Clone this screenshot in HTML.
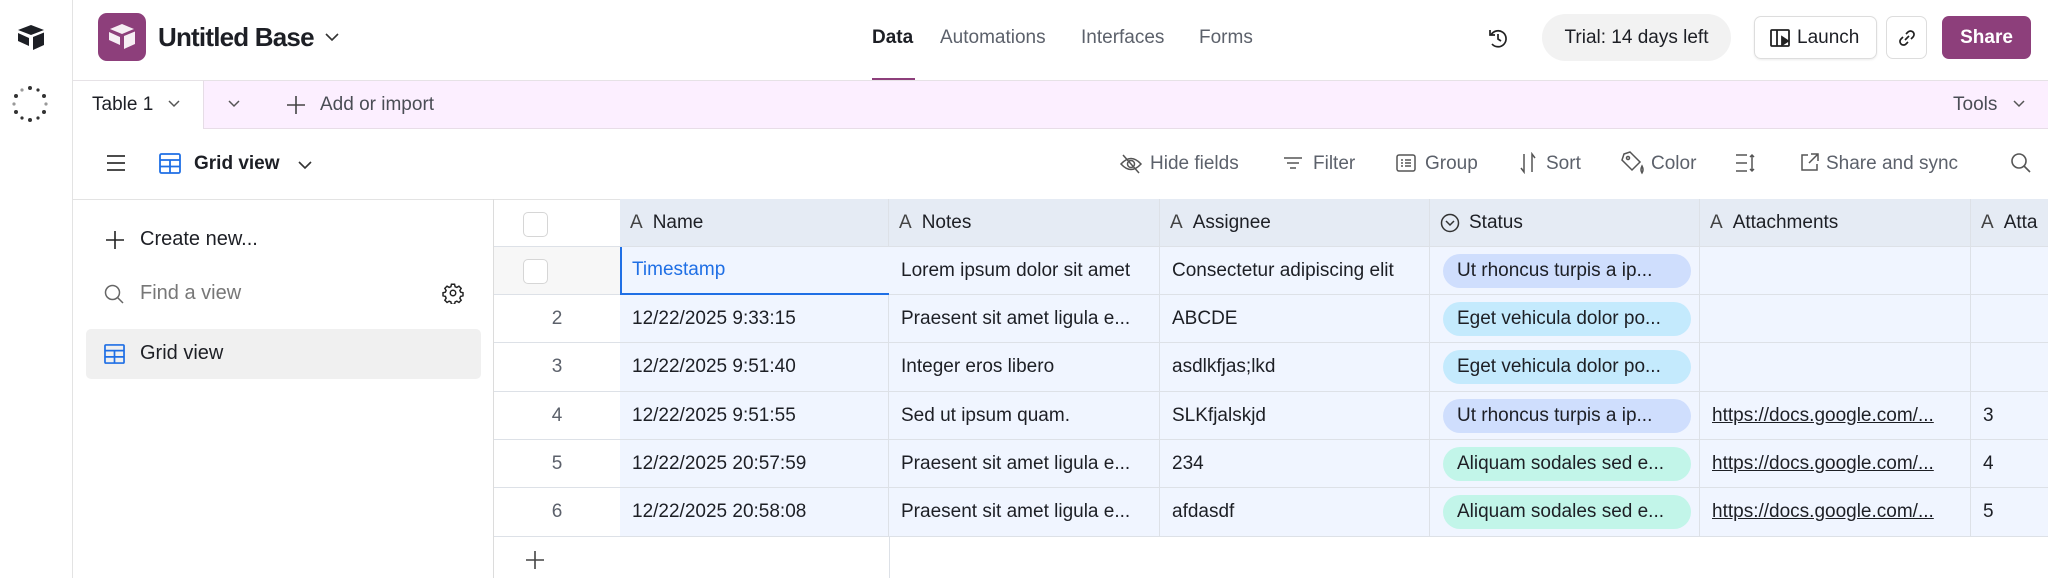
<!DOCTYPE html>
<html><head><meta charset="utf-8"><style>
*{box-sizing:border-box;margin:0;padding:0}
body{width:2048px;height:578px;overflow:hidden;background:#fff;font-family:"Liberation Sans",sans-serif;color:#1d1f25;position:relative;font-size:19px}
.a{position:absolute;white-space:nowrap}
.c{position:absolute;white-space:nowrap;overflow:hidden;display:flex;align-items:center;padding-left:12px;border-right:1px solid #dde1e7;border-bottom:1px solid #dde1e7;background:#f0f5ff}
.h{background:#e5ebf4;font-weight:normal}
.pill{border-radius:17px;height:34px;padding:0 14px;display:flex;align-items:center;width:248px;margin-left:4px}
.g{color:#5c616b}
</style></head><body>
<div class="a" style="left:72px;top:0;width:1px;height:578px;background:#e3e3e3"></div>
<svg class="a" style="left:16px;top:24px" width="30" height="28" viewBox="0 0 30 28"><path d="M15 1 L28 6 L15 11 L2 6Z" fill="#1d1f25"/><path d="M17 13 L28 8.5 V21 L17 26Z" fill="#1d1f25"/><path d="M2 9 L13 14 V22 L2 17Z" fill="#1d1f25"/></svg>
<svg class="a" style="left:10px;top:84px" width="40" height="40" viewBox="0 0 40 40"><g fill="#333"><circle cx="20" cy="4" r="2"/><circle cx="28" cy="6" r="1.6"/><circle cx="34" cy="12" r="2"/><circle cx="36" cy="20" r="1.6" fill="#999"/><circle cx="34" cy="28" r="2"/><circle cx="28" cy="34" r="1.6"/><circle cx="20" cy="36" r="2"/><circle cx="12" cy="34" r="1.6"/><circle cx="6" cy="28" r="2"/><circle cx="4" cy="20" r="1.6" fill="#999"/><circle cx="6" cy="12" r="2"/><circle cx="12" cy="6" r="1.6" fill="#999"/></g></svg>
<div class="a" style="left:98px;top:13px;width:48px;height:48px;border-radius:9px;background:#8d3f7b"></div>
<svg class="a" style="left:104px;top:19px" width="36" height="36" viewBox="0 0 36 36"><path d="M18 5 L30 10 L18 15 L6 10Z" fill="#f6eef4"/><path d="M20 17 L31 12.5 V25 L20 30Z" fill="#f6eef4"/><path d="M5 13 L16 18 V26 L5 21Z" fill="#f6eef4"/></svg>
<div class="a" style="left:158px;top:22px;font-size:26px;font-weight:bold;letter-spacing:-0.8px">Untitled Base</div>
<svg class="a" style="left:324px;top:31px" width="16" height="12"><path d="M2 3 L8 9 L14 3" stroke="#333" stroke-width="1.6" fill="none"/></svg>
<div class="a" style="left:872px;top:27px;font-size:19px;font-weight:bold">Data</div>
<div class="a" style="left:872px;top:78px;width:43px;height:3px;background:#8d3f7b"></div>
<div class="a g" style="left:940px;top:27px;font-size:19px">Automations</div>
<div class="a g" style="left:1081px;top:27px;font-size:19px">Interfaces</div>
<div class="a g" style="left:1199px;top:27px;font-size:19px">Forms</div>
<svg class="a" style="left:1486px;top:27px" width="24" height="24" viewBox="0 0 24 24" fill="none" stroke="#222" stroke-width="1.7"><path d="M5 8 A8 8 0 1 1 6 17"/><path d="M4 3 V8 H9"/><path d="M12 7 V12 L15 14"/></svg>
<div class="a" style="left:1542px;top:14px;width:189px;height:47px;border-radius:24px;background:#f2f2f2;display:flex;align-items:center;justify-content:center;font-size:19px">Trial: 14 days left</div>
<div class="a" style="left:1754px;top:16px;width:123px;height:43px;border-radius:7px;border:1px solid #ddd;box-shadow:0 1px 2px rgba(0,0,0,.08);display:flex;align-items:center;padding-left:14px;font-size:19px"><svg width="24" height="22" viewBox="0 0 24 22" fill="none" stroke="#222" stroke-width="1.8"><rect x="2" y="3" width="18" height="16" rx="1"/><path d="M8 3 V19"/><path d="M13 10 L19 14 L13 18Z" fill="#222"/></svg><span style="margin-left:4px">Launch</span></div>
<div class="a" style="left:1886px;top:16px;width:41px;height:43px;border-radius:7px;border:1px solid #ddd;display:flex;align-items:center;justify-content:center"><svg width="20" height="20" viewBox="0 0 20 20" fill="none" stroke="#222" stroke-width="1.7"><path d="M8 12 L12 8"/><path d="M9 6 L11 4 A3 3 0 0 1 16 9 L14 11"/><path d="M11 14 L9 16 A3 3 0 0 1 4 11 L6 9"/></svg></div>
<div class="a" style="left:1942px;top:16px;width:89px;height:43px;border-radius:7px;background:#8d3f7b;color:#fff;font-weight:bold;display:flex;align-items:center;justify-content:center;font-size:19px">Share</div>
<div class="a" style="left:73px;top:80px;width:1975px;height:49px;background:#fcefff;border-top:1px solid #e6e2e6;border-bottom:1px solid #e8dde8"></div>
<div class="a" style="left:73px;top:80px;width:131px;height:49px;background:#fff;border-right:1px solid #e6dde6;border-top:1px solid #e6e2e6"></div>
<div class="a" style="left:92px;top:94px;font-size:19px">Table 1</div>
<svg class="a" style="left:167px;top:98px" width="14" height="12"><path d="M2 3 L7 8 L12 3" stroke="#555" stroke-width="1.5" fill="none"/></svg>
<svg class="a" style="left:227px;top:98px" width="14" height="12"><path d="M2 3 L7 8 L12 3" stroke="#555" stroke-width="1.5" fill="none"/></svg>
<svg class="a" style="left:286px;top:95px" width="20" height="20"><path d="M10 1 V19 M1 10 H19" stroke="#444" stroke-width="1.6"/></svg>
<div class="a" style="left:320px;top:94px;font-size:19px;color:#4a4d55">Add or import</div>
<div class="a" style="left:1953px;top:94px;font-size:19px;color:#4a4d55">Tools</div>
<svg class="a" style="left:2012px;top:98px" width="14" height="12"><path d="M2 3 L7 8 L12 3" stroke="#555" stroke-width="1.5" fill="none"/></svg>
<svg class="a" style="left:106px;top:154px" width="20" height="18"><path d="M1 2 H19 M1 9 H19 M1 16 H19" stroke="#333" stroke-width="1.8"/></svg>
<svg class="a" style="left:159px;top:153px" width="22" height="21" viewBox="0 0 22 21" fill="none" stroke="#1f6fe5" stroke-width="1.8"><rect x="1" y="1" width="20" height="19" rx="1.5"/><path d="M1 7 H21 M1 13.5 H21 M11 7 V20"/></svg>
<div class="a" style="left:194px;top:153px;font-size:19px;font-weight:bold">Grid view</div>
<svg class="a" style="left:297px;top:159px" width="16" height="12"><path d="M2 3 L8 9 L14 3" stroke="#333" stroke-width="1.6" fill="none"/></svg>
<svg class="a" style="left:1119px;top:153px" width="24" height="22" viewBox="0 0 24 22" fill="none" stroke="#555" stroke-width="1.5"><path d="M2 11 Q12 0 22 11 Q12 22 2 11Z"/><circle cx="12" cy="11" r="3.5"/><path d="M4 2 L20 20"/></svg>
<div class="a g" style="left:1150px;top:153px">Hide fields</div>
<svg class="a" style="left:1283px;top:155px" width="20" height="16"><path d="M1 3 H19 M4 8 H16 M7 13 H13" stroke="#555" stroke-width="1.5"/></svg>
<div class="a g" style="left:1313px;top:153px">Filter</div>
<svg class="a" style="left:1396px;top:153px" width="20" height="20" fill="none" stroke="#555" stroke-width="1.5"><rect x="1" y="2" width="18" height="16" rx="2"/><path d="M5 7 H7 M9 7 H15 M5 10 H7 M9 10 H15 M5 13 H7 M9 13 H15"/></svg>
<div class="a g" style="left:1425px;top:153px">Group</div>
<svg class="a" style="left:1518px;top:152px" width="20" height="22" fill="none" stroke="#555" stroke-width="1.5"><path d="M6 2 V20 L3 16 M14 20 V2 L17 6"/></svg>
<div class="a g" style="left:1546px;top:153px">Sort</div>
<svg class="a" style="left:1620px;top:150px" width="26" height="26" fill="none" stroke="#555" stroke-width="1.5"><path d="M10 2 L20 12 L12 20 L2 10 L4 4Z"/><circle cx="8" cy="8" r="1.5"/><path d="M22 16 Q20 20 22 23 Q24 20 22 16Z"/></svg>
<div class="a g" style="left:1651px;top:153px">Color</div>
<svg class="a" style="left:1735px;top:153px" width="22" height="20" fill="none" stroke="#555" stroke-width="1.5"><path d="M1 2 H12 M1 10 H12 M1 18 H12 M17 2 V18 M15 4 L17 2 L19 4 M15 16 L17 18 L19 16"/></svg>
<svg class="a" style="left:1800px;top:152px" width="20" height="20" fill="none" stroke="#555" stroke-width="1.5"><path d="M8 3 H2 V18 H17 V12 M11 2 H18 V9 M18 2 L9 11"/></svg>
<div class="a g" style="left:1826px;top:153px">Share and sync</div>
<svg class="a" style="left:2010px;top:152px" width="22" height="22" fill="none" stroke="#555" stroke-width="1.6"><circle cx="9" cy="9" r="7"/><path d="M14 14 L20 20"/></svg>
<div class="a" style="left:73px;top:199px;width:1975px;height:1px;background:#e3e3e3"></div>
<div class="a" style="left:493px;top:199px;width:1px;height:379px;background:#dcdcdc"></div>
<svg class="a" style="left:105px;top:230px" width="20" height="20"><path d="M10 1 V19 M1 10 H19" stroke="#222" stroke-width="1.6"/></svg>
<div class="a" style="left:140px;top:228px;font-size:20px">Create new...</div>
<svg class="a" style="left:104px;top:284px" width="20" height="20" fill="none" stroke="#666" stroke-width="1.5"><circle cx="8.5" cy="8.5" r="7"/><path d="M13.5 13.5 L19 19"/></svg>
<div class="a" style="left:140px;top:282px;font-size:20px;color:#777">Find a view</div>
<svg class="a" style="left:442px;top:282px" width="22" height="22" viewBox="0 0 24 24" fill="none" stroke="#222" stroke-width="1.6"><circle cx="12" cy="12" r="3"/><path d="M10.3 2.5h3.4l.6 2.6 1.9.8 2.3-1.4 2.4 2.4-1.4 2.3.8 1.9 2.6.6v3.4l-2.6.6-.8 1.9 1.4 2.3-2.4 2.4-2.3-1.4-1.9.8-.6 2.6h-3.4l-.6-2.6-1.9-.8-2.3 1.4-2.4-2.4 1.4-2.3-.8-1.9-2.6-.6v-3.4l2.6-.6.8-1.9-1.4-2.3 2.4-2.4 2.3 1.4 1.9-.8z"/></svg>
<div class="a" style="left:86px;top:329px;width:395px;height:50px;border-radius:5px;background:#f0f0f0"></div>
<svg class="a" style="left:104px;top:344px" width="21" height="20" viewBox="0 0 22 21" fill="none" stroke="#1f6fe5" stroke-width="1.8"><rect x="1" y="1" width="20" height="19" rx="1"/><path d="M1 7 H21 M1 13.5 H21 M11 7 V20"/></svg>
<div class="a" style="left:140px;top:342px;font-size:20px">Grid view</div>
<div class="a" style="left:494px;top:199px;width:126px;height:48px;border-bottom:1px solid #dde1e7"></div>
<div class="a" style="left:523px;top:212px;width:25px;height:25px;border:1px solid #d6d6d6;border-radius:5px;background:#fff"></div>
<div class="c h" style="left:620px;top:199px;width:269px;height:48px;padding-left:10px"><span style="color:#444;margin-right:10px">A</span>Name</div>
<div class="c h" style="left:889px;top:199px;width:271px;height:48px;padding-left:10px"><span style="color:#444;margin-right:10px">A</span>Notes</div>
<div class="c h" style="left:1160px;top:199px;width:270px;height:48px;padding-left:10px"><span style="color:#444;margin-right:10px">A</span>Assignee</div>
<div class="c h" style="left:1430px;top:199px;width:270px;height:48px;padding-left:10px"><svg width="20" height="20" style="margin-right:9px" fill="none" stroke="#333" stroke-width="1.5"><circle cx="10" cy="10" r="8.5"/><path d="M6 8 L10 12 L14 8"/></svg>Status</div>
<div class="c h" style="left:1700px;top:199px;width:271px;height:48px;padding-left:10px"><span style="color:#444;margin-right:10px">A</span>Attachments</div>
<div class="c h" style="left:1971px;top:199px;width:77px;height:48px;padding-left:10px;border-right:none"><span style="color:#444;margin-right:10px">A</span>Atta</div>
<div class="a" style="left:494px;top:247px;width:126px;height:48px;background:#f7f7f7;border-bottom:1px solid #dde1e7"></div>
<div class="a" style="left:523px;top:259px;width:25px;height:25px;border:1px solid #d6d6d6;border-radius:5px;background:#fff"></div>
<div class="c" style="left:620px;top:247px;width:269px;height:48px;color:#1f6fe5;border:2px solid #1f6fe5;border-top:none;border-right:none;padding-left:10px">Timestamp</div>
<div class="c" style="left:889px;top:247px;width:271px;height:48px">Lorem ipsum dolor sit amet</div>
<div class="c" style="left:1160px;top:247px;width:270px;height:48px">Consectetur adipiscing elit</div>
<div class="c" style="left:1430px;top:247px;width:270px;height:48px;padding-left:9px"><div class="pill" style="background:#cfdefd">Ut rhoncus turpis a ip...</div></div>
<div class="c" style="left:1700px;top:247px;width:271px;height:48px"></div>
<div class="c" style="left:1971px;top:247px;width:77px;height:48px;border-right:none"></div>
<div class="a g" style="left:494px;top:295px;width:126px;height:48px;border-bottom:1px solid #dde1e7;display:flex;align-items:center;justify-content:center">2</div>
<div class="c" style="left:620px;top:295px;width:269px;height:48px">12/22/2025 9:33:15</div>
<div class="c" style="left:889px;top:295px;width:271px;height:48px">Praesent sit amet ligula e...</div>
<div class="c" style="left:1160px;top:295px;width:270px;height:48px">ABCDE</div>
<div class="c" style="left:1430px;top:295px;width:270px;height:48px;padding-left:9px"><div class="pill" style="background:#c4eafd">Eget vehicula dolor po...</div></div>
<div class="c" style="left:1700px;top:295px;width:271px;height:48px"></div>
<div class="c" style="left:1971px;top:295px;width:77px;height:48px;border-right:none"></div>
<div class="a g" style="left:494px;top:343px;width:126px;height:49px;border-bottom:1px solid #dde1e7;display:flex;align-items:center;justify-content:center">3</div>
<div class="c" style="left:620px;top:343px;width:269px;height:49px">12/22/2025 9:51:40</div>
<div class="c" style="left:889px;top:343px;width:271px;height:49px">Integer eros libero</div>
<div class="c" style="left:1160px;top:343px;width:270px;height:49px">asdlkfjas;lkd</div>
<div class="c" style="left:1430px;top:343px;width:270px;height:49px;padding-left:9px"><div class="pill" style="background:#c4eafd">Eget vehicula dolor po...</div></div>
<div class="c" style="left:1700px;top:343px;width:271px;height:49px"></div>
<div class="c" style="left:1971px;top:343px;width:77px;height:49px;border-right:none"></div>
<div class="a g" style="left:494px;top:392px;width:126px;height:48px;border-bottom:1px solid #dde1e7;display:flex;align-items:center;justify-content:center">4</div>
<div class="c" style="left:620px;top:392px;width:269px;height:48px">12/22/2025 9:51:55</div>
<div class="c" style="left:889px;top:392px;width:271px;height:48px">Sed ut ipsum quam.</div>
<div class="c" style="left:1160px;top:392px;width:270px;height:48px">SLKfjalskjd</div>
<div class="c" style="left:1430px;top:392px;width:270px;height:48px;padding-left:9px"><div class="pill" style="background:#cfdefd">Ut rhoncus turpis a ip...</div></div>
<div class="c" style="left:1700px;top:392px;width:271px;height:48px"><u>https://docs.google.com/...</u></div>
<div class="c" style="left:1971px;top:392px;width:77px;height:48px;border-right:none">3</div>
<div class="a g" style="left:494px;top:440px;width:126px;height:48px;border-bottom:1px solid #dde1e7;display:flex;align-items:center;justify-content:center">5</div>
<div class="c" style="left:620px;top:440px;width:269px;height:48px">12/22/2025 20:57:59</div>
<div class="c" style="left:889px;top:440px;width:271px;height:48px">Praesent sit amet ligula e...</div>
<div class="c" style="left:1160px;top:440px;width:270px;height:48px">234</div>
<div class="c" style="left:1430px;top:440px;width:270px;height:48px;padding-left:9px"><div class="pill" style="background:#c2f5e9">Aliquam sodales sed e...</div></div>
<div class="c" style="left:1700px;top:440px;width:271px;height:48px"><u>https://docs.google.com/...</u></div>
<div class="c" style="left:1971px;top:440px;width:77px;height:48px;border-right:none">4</div>
<div class="a g" style="left:494px;top:488px;width:126px;height:49px;border-bottom:1px solid #dde1e7;display:flex;align-items:center;justify-content:center">6</div>
<div class="c" style="left:620px;top:488px;width:269px;height:49px">12/22/2025 20:58:08</div>
<div class="c" style="left:889px;top:488px;width:271px;height:49px">Praesent sit amet ligula e...</div>
<div class="c" style="left:1160px;top:488px;width:270px;height:49px">afdasdf</div>
<div class="c" style="left:1430px;top:488px;width:270px;height:49px;padding-left:9px"><div class="pill" style="background:#c2f5e9">Aliquam sodales sed e...</div></div>
<div class="c" style="left:1700px;top:488px;width:271px;height:49px"><u>https://docs.google.com/...</u></div>
<div class="c" style="left:1971px;top:488px;width:77px;height:49px;border-right:none">5</div>
<div class="a" style="left:889px;top:537px;width:1px;height:41px;background:#dde1e7"></div>
<svg class="a" style="left:525px;top:550px" width="20" height="20"><path d="M10 1 V19 M1 10 H19" stroke="#444" stroke-width="1.6"/></svg>
</body></html>
